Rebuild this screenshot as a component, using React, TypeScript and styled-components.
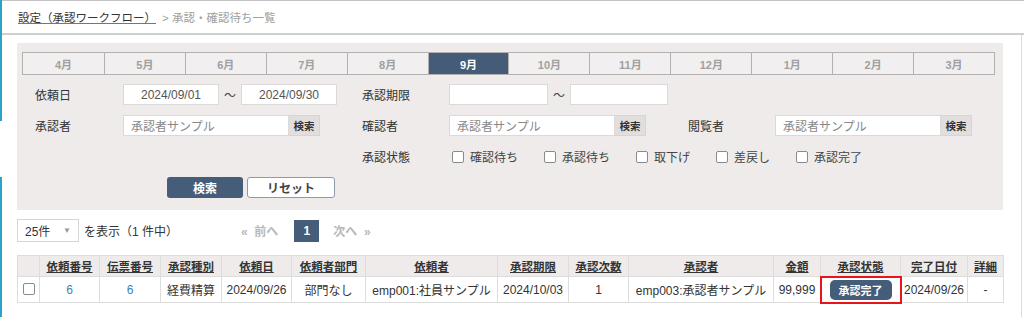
import React from "react";
import styled, { createGlobalStyle, css } from "styled-components";

const GlobalStyle = createGlobalStyle`
  html, body { margin: 0; padding: 0; background: #fff; }
  body { font-family: "Liberation Sans", "Noto Sans CJK JP", sans-serif; color: #333; }
  * { box-sizing: border-box; }
`;

const Page = styled.div`
  width: 1024px;
  height: 317px;
  display: flex;
  overflow: hidden;
`;

const Stripe = styled.div`
  width: 2px;
  flex: none;
  background: linear-gradient(
    to bottom,
    #2aa3c6 0px,
    #2aa3c6 121px,
    transparent 121px,
    transparent 177px,
    #2aa3c6 177px
  );
`;

const Main = styled.div`
  flex: 1;
  display: flex;
  flex-direction: column;
`;

const Header = styled.div`
  height: 35px;
  border-top: 1px solid #c4c4c4;
  border-bottom: 2px solid #cfcfcf;
  display: flex;
  align-items: center;
  padding-left: 16px;
  font-size: 11.5px;
  padding-bottom: 1px;
`;

const Crumb = styled.a`
  color: #333;
  text-decoration: underline;
  text-decoration-color: #7a7a5a;
`;

const CrumbRest = styled.span`
  color: #a0a0a0;
  margin-left: 6px;
`;

const Body = styled.div`
  flex: 1;
  display: flex;
`;

const Content = styled.div`
  flex: 1;
  padding: 8px 0 0 15px;
  display: flex;
  flex-direction: column;
`;

const RightRail = styled.div`
  width: 3px;
  flex: none;
  border-left: 1px solid #d6dde6;
`;

const Panel = styled.div`
  width: 986px;
  height: 167px;
  background: #eeebea;
  padding: 9px 8px 12px 5px;
`;

const Tabs = styled.div`
  display: grid;
  grid-template-columns: repeat(12, 1fr);
  border: 1px solid #b3b0b0;
  height: 23px;
`;

const Tab = styled.div<{ $active?: boolean }>`
  display: flex;
  align-items: center;
  justify-content: center;
  font-size: 11px;
  font-weight: bold;
  color: #a0a0a0;
  background: #f1efef;
  & + & { border-left: 1px solid #b3b0b0; }
  ${(p) =>
    p.$active &&
    css`
      background: #445c78;
      color: #fff;
    `}
`;

const FormGrid = styled.div`
  margin: 9px 0 0 13px;
  display: grid;
  grid-template-columns: 88px 239px 87px 239px 87px 1fr;
  grid-auto-rows: 21px;
  row-gap: 10px;
  align-items: center;
`;

const Label = styled.div<{ $col?: number }>`
  font-size: 12px;
  color: #333;
  ${(p) => p.$col && css`grid-column: ${p.$col};`}
`;

const Field = styled.div<{ $span?: number }>`
  display: flex;
  align-items: center;
  height: 21px;
  ${(p) => p.$span && css`grid-column: span ${p.$span};`}
`;

const DateInput = styled.div<{ $w: number }>`
  width: ${(p) => p.$w}px;
  height: 21px;
  background: #fff;
  border: 1px solid #dcd9d9;
  font-size: 12px;
  color: #555;
  display: flex;
  align-items: center;
  justify-content: center;
`;

const Tilde = styled.span`
  width: 22px;
  text-align: center;
  font-size: 12px;
  color: #444;
`;

const TextInput = styled.div`
  width: 166px;
  height: 21px;
  background: #fff;
  border: 1px solid #dcd9d9;
  font-size: 12px;
  color: #888;
  display: flex;
  align-items: center;
  padding-left: 7px;
`;

const LookupBtn = styled.div`
  width: 31px;
  height: 21px;
  background: #e2dede;
  border: 1px solid #d8d4d4;
  border-left: none;
  font-size: 10.5px;
  font-weight: bold;
  color: #333;
  display: flex;
  align-items: center;
  justify-content: center;
`;

const Checks = styled.div`
  grid-column: 4 / span 3;
  display: flex;
  align-items: center;
  gap: 26px;
  margin-left: 3px;
`;

const Check = styled.label`
  display: flex;
  align-items: center;
  font-size: 12px;
  color: #444;
`;

const Box = styled.span`
  width: 12px;
  height: 12px;
  border: 1px solid #8a8a8a;
  border-radius: 2px;
  background: #fff;
  margin-right: 6px;
  display: inline-block;
`;

const ButtonRow = styled.div`
  display: flex;
  gap: 4px;
  margin: 10px 0 0 145px;
`;

const Button = styled.div<{ $primary?: boolean }>`
  height: 21px;
  border-radius: 3px;
  font-size: 12px;
  font-weight: bold;
  display: flex;
  align-items: center;
  justify-content: center;
  ${(p) =>
    p.$primary
      ? css`
          width: 76px;
          background: #455d79;
          color: #fff;
        `
      : css`
          width: 88px;
          background: #fff;
          color: #444;
          border: 1px solid #8c9aab;
        `}
`;

const Controls = styled.div`
  display: flex;
  align-items: center;
  margin-top: 9px;
  height: 23px;
`;

const Select = styled.div`
  width: 62px;
  height: 23px;
  border: 1px solid #d6d6d6;
  background: #fff;
  font-size: 12px;
  color: #333;
  display: flex;
  align-items: center;
  justify-content: space-between;
  padding: 0 7px 0 7px;
`;

const Caret = styled.span`
  font-size: 8px;
  color: #999;
`;

const CountText = styled.span`
  font-size: 12px;
  color: #333;
  margin-left: 5px;
`;

const Pager = styled.div`
  display: flex;
  align-items: center;
  margin-left: 63px;
  font-size: 12px;
  color: #b8b8b8;
  font-weight: bold;
`;

const PageNum = styled.div`
  width: 25px;
  height: 22px;
  background: #455d79;
  color: #fff;
  font-size: 12px;
  font-weight: bold;
  display: flex;
  align-items: center;
  justify-content: center;
  margin: 0 14px 0 16px;
`;

const Table = styled.table`
  margin-top: 13px;
  width: 986px;
  table-layout: fixed;
  border-collapse: collapse;
  font-size: 12px;
`;

const Th = styled.th`
  height: 21px;
  background: #eeebea;
  border: 1px solid #ddd;
  font-weight: bold;
  font-size: 11.5px;
  color: #333;
  text-decoration: underline;
  padding: 0;
  text-align: center;
`;

const Td = styled.td<{ $hl?: boolean; $link?: boolean }>`
  height: 26px;
  border: 1px solid #ddd;
  text-align: center;
  padding: 0;
  font-size: 12px;
  color: ${(p) => (p.$link ? "#3e7fb9" : "#333")};
  white-space: nowrap;
  ${(p) =>
    p.$hl &&
    css`
      outline: 2px solid #e8141b;
      outline-offset: -1px;
    `}
`;

const RowBox = styled(Box)`
  margin: 0;
  vertical-align: -1px;
`;

const StatusBadge = styled.span`
  display: inline-flex;
  align-items: center;
  justify-content: center;
  width: 62px;
  height: 20px;
  border-radius: 5px;
  background: #455d79;
  color: #fff;
  font-size: 11px;
  font-weight: bold;
`;

const months = ["4月", "5月", "6月", "7月", "8月", "9月", "10月", "11月", "12月", "1月", "2月", "3月"];

const cols: [string, number][] = [
  ["", 22],
  ["依頼番号", 60],
  ["伝票番号", 61],
  ["承認種別", 61],
  ["依頼日", 70],
  ["依頼者部門", 74],
  ["依頼者", 132],
  ["承認期限", 71],
  ["承認次数", 60],
  ["承認者", 145],
  ["金額", 47],
  ["承認状態", 80],
  ["完了日付", 67],
  ["詳細", 36],
];

const statuses = ["確認待ち", "承認待ち", "取下げ", "差戻し", "承認完了"];

export default function App() {
  return (
    <>
      <GlobalStyle />
      <Page>
        <Stripe />
        <Main>
          <Header>
            <Crumb>設定（承認ワークフロー）</Crumb>
            <CrumbRest>&gt; 承認・確認待ち一覧</CrumbRest>
          </Header>
          <Body>
            <Content>
              <Panel>
                <Tabs>
                  {months.map((m) => (
                    <Tab key={m} $active={m === "9月"}>
                      {m}
                    </Tab>
                  ))}
                </Tabs>
                <FormGrid>
                  <Label>依頼日</Label>
                  <Field>
                    <DateInput $w={96}>2024/09/01</DateInput>
                    <Tilde>〜</Tilde>
                    <DateInput $w={96}>2024/09/30</DateInput>
                  </Field>
                  <Label>承認期限</Label>
                  <Field $span={3}>
                    <DateInput $w={99}>{""}</DateInput>
                    <Tilde>〜</Tilde>
                    <DateInput $w={98}>{""}</DateInput>
                  </Field>

                  <Label>承認者</Label>
                  <Field>
                    <TextInput>承認者サンプル</TextInput>
                    <LookupBtn>検索</LookupBtn>
                  </Field>
                  <Label>確認者</Label>
                  <Field>
                    <TextInput>承認者サンプル</TextInput>
                    <LookupBtn>検索</LookupBtn>
                  </Field>
                  <Label>閲覧者</Label>
                  <Field>
                    <TextInput>承認者サンプル</TextInput>
                    <LookupBtn>検索</LookupBtn>
                  </Field>

                  <Label $col={3}>承認状態</Label>
                  <Checks>
                    {statuses.map((s) => (
                      <Check key={s}>
                        <Box />
                        {s}
                      </Check>
                    ))}
                  </Checks>
                </FormGrid>
                <ButtonRow>
                  <Button $primary>検索</Button>
                  <Button>リセット</Button>
                </ButtonRow>
              </Panel>

              <Controls>
                <Select>
                  25件 <Caret>▼</Caret>
                </Select>
                <CountText>を表示（1 件中）</CountText>
                <Pager>
                  <span>«&nbsp; 前へ</span>
                  <PageNum>1</PageNum>
                  <span>次へ &nbsp;»</span>
                </Pager>
              </Controls>

              <Table>
                <colgroup>
                  {cols.map(([n, w], i) => (
                    <col key={i} style={{ width: w }} />
                  ))}
                </colgroup>
                <thead>
                  <tr>
                    {cols.map(([n], i) => (
                      <Th key={i}>{n}</Th>
                    ))}
                  </tr>
                </thead>
                <tbody>
                  <tr>
                    <Td>
                      <RowBox />
                    </Td>
                    <Td $link>6</Td>
                    <Td $link>6</Td>
                    <Td>経費精算</Td>
                    <Td>2024/09/26</Td>
                    <Td>部門なし</Td>
                    <Td>emp001:社員サンプル</Td>
                    <Td>2024/10/03</Td>
                    <Td>1</Td>
                    <Td>emp003:承認者サンプル</Td>
                    <Td>99,999</Td>
                    <Td $hl>
                      <StatusBadge>承認完了</StatusBadge>
                    </Td>
                    <Td>2024/09/26</Td>
                    <Td>-</Td>
                  </tr>
                </tbody>
              </Table>
            </Content>
            <RightRail />
          </Body>
        </Main>
      </Page>
    </>
  );
}
